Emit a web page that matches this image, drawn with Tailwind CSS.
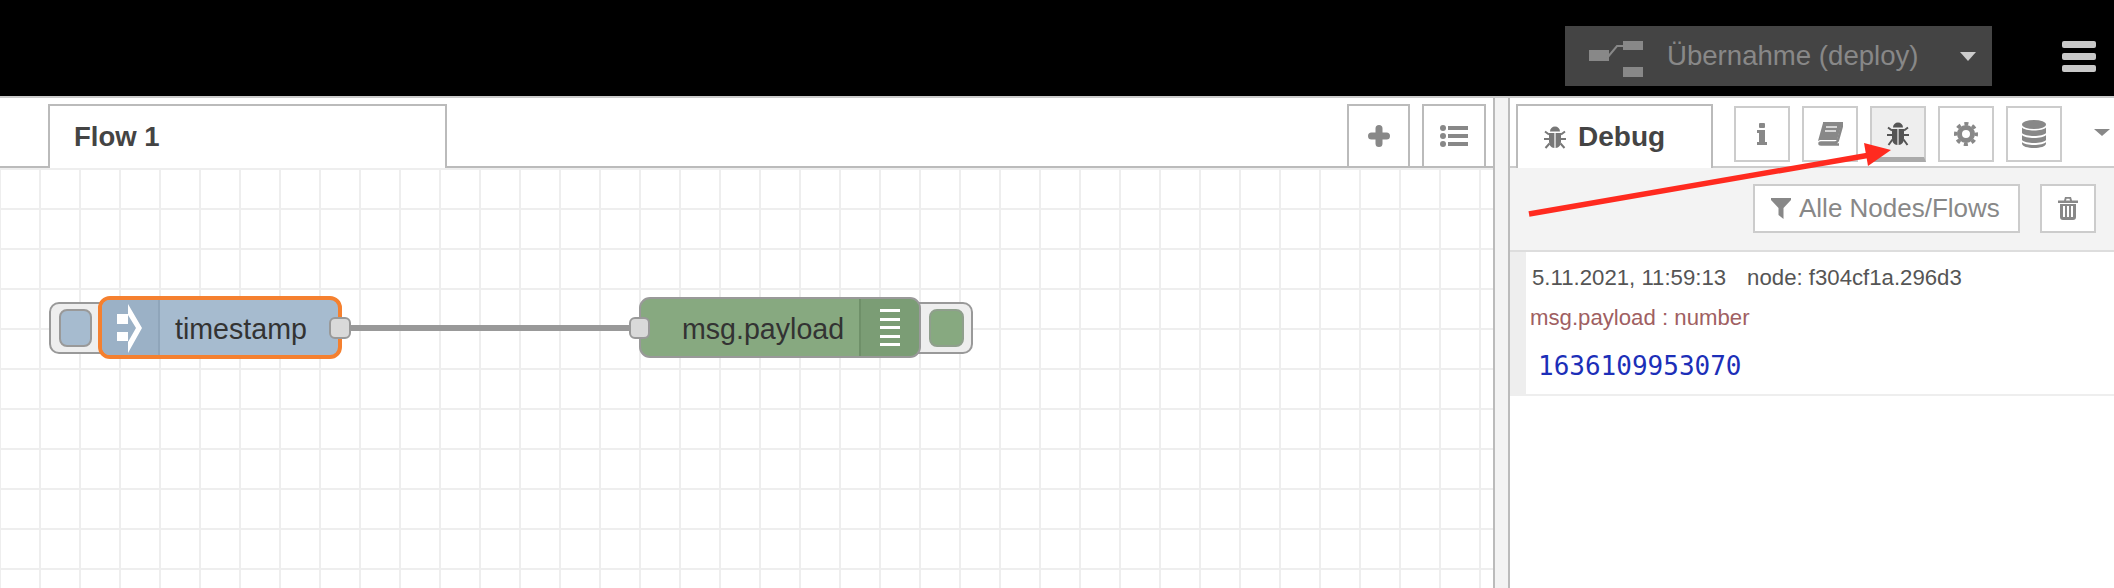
<!DOCTYPE html>
<html lang="de">
  <head>
    <meta charset="UTF-8" />
    <title>Node-RED</title>
    <script src="https://cdn.jsdelivr.net/npm/@tailwindcss/browser@4"></script>
  </head>
  <body class="bg-white overflow-hidden font-['Liberation_Sans',sans-serif]">
    <div class="relative w-[2114px] h-[588px] flex flex-col overflow-hidden">
      <!-- Header -->
      <header class="h-[98px] shrink-0 bg-black border-b-2 border-[#ccc] flex items-start justify-end">
        <div class="mt-[26px] w-[427px] h-[60px] bg-[#444] flex items-center text-[#888]">
          <svg class="ml-[24px] mt-[6px] w-[54px] h-[36px] shrink-0" viewBox="0 0 54 36" fill="#888">
            <rect x="0" y="9" width="20" height="11" />
            <rect x="34" y="0" width="20" height="9" />
            <rect x="34" y="26" width="20" height="10" />
            <path d="M18 17 L28 5 H35" fill="none" stroke="#888" stroke-width="2" />
          </svg>
          <span class="ml-[24px] text-[27.6px] leading-none whitespace-nowrap">Übernahme (deploy)</span>
          <svg class="ml-[41px] w-[16px] h-[9px] shrink-0" viewBox="0 0 16 9" fill="#ccc"><path d="M0 0H16L8 9Z" /></svg>
        </div>
        <div class="ml-[70px] mr-[18px] mt-[41px] w-[34px] flex flex-col gap-[5px]">
          <div class="h-[7px] rounded-[2px] bg-[#c8c8c8]"></div>
          <div class="h-[7px] rounded-[2px] bg-[#c8c8c8]"></div>
          <div class="h-[7px] rounded-[2px] bg-[#c8c8c8]"></div>
        </div>
      </header>

      <main class="flex flex-1 min-h-0">
        <!-- Workspace -->
        <section class="w-[1495px] shrink-0 flex flex-col border-r-2 border-[#bbb]">
          <div class="h-[70px] shrink-0 flex items-end border-b-2 border-[#bbb]">
            <div class="ml-[48px] -mb-[2px] w-[399px] h-[64px] bg-white border-2 border-b-0 border-[#bbb] pl-[24px] flex items-center text-[27.5px] font-bold text-[#444]">Flow 1</div>
            <div class="ml-[900px] -mb-[2px] w-[63px] h-[64px] border-2 border-[#bbb] flex items-center justify-center">
              <svg class="w-[22px] h-[22px]" viewBox="0 0 22 22"><path d="M3.5 11H18.5M11 3.5V18.5" stroke="#888" stroke-width="7" stroke-linecap="round" /></svg>
            </div>
            <div class="ml-[12px] -mb-[2px] w-[64px] h-[64px] border-2 border-[#bbb] flex items-center justify-center">
              <svg class="w-[28px] h-[22px]" viewBox="0 0 28 22" fill="#888">
                <circle cx="3" cy="3" r="3" /><circle cx="3" cy="11" r="3" /><circle cx="3" cy="19" r="3" />
                <rect x="8" y="1" width="20" height="4" /><rect x="8" y="9" width="20" height="4" /><rect x="8" y="17" width="20" height="4" />
              </svg>
            </div>
          </div>

          <!-- Canvas -->
          <div class="relative flex-1 overflow-hidden bg-white bg-[linear-gradient(to_right,#eee_2px,transparent_2px),linear-gradient(to_bottom,#eee_2px,transparent_2px)] bg-[size:40px_40px] bg-[position:-1px_0]">
            <!-- wire -->
            <div class="absolute left-[351px] top-[157px] w-[280px] h-[6px] bg-[#999]"></div>

            <!-- timestamp node -->
            <div class="absolute left-[49px] top-[134px] w-[60px] h-[52px] rounded-l-[10px] bg-[#eee] border-2 border-[#999] flex items-center pl-[8px]">
              <div class="w-[33px] h-[38px] rounded-[8px] bg-[#a6bbcf] border-2 border-[#999]"></div>
            </div>
            <div class="absolute left-[98px] top-[128px] w-[244px] h-[63px] rounded-[12px] border-4 border-[#f5802f] bg-[#a6bbcf] flex overflow-hidden">
              <div class="w-[58px] shrink-0 bg-[#9bb1c6] border-r-2 border-[#8fa5ba] relative">
                <svg class="absolute left-[15px] top-[4px] w-[26px] h-[50px]" viewBox="0 0 26 50" fill="#fff">
                  <rect x="0" y="10" width="11" height="10" />
                  <rect x="0" y="28" width="11" height="9" />
                  <path d="M11 0 L25 24 L11 49 V38 L19 24 L11 11 Z" />
                </svg>
              </div>
              <div class="flex-1 text-[28.6px] text-[#333] leading-none flex items-center pl-[15px] pt-[3px]">timestamp</div>
            </div>
            <div class="absolute left-[329px] top-[149px] w-[22px] h-[22px] rounded-[6px] bg-[#d9d9d9] border-2 border-[#999]"></div>

            <!-- msg.payload node -->
            <div class="absolute left-[905px] top-[134px] w-[68px] h-[52px] rounded-r-[10px] bg-[#eee] border-2 border-[#999] flex items-center justify-end pr-[7px]">
              <div class="w-[35px] h-[38px] rounded-[8px] bg-[#87a980] border-2 border-[#8f9f8c]"></div>
            </div>
            <div class="absolute left-[639px] top-[129px] w-[282px] h-[61px] rounded-[11px] border-2 border-[#999] bg-[#87a980] flex overflow-hidden">
              <div class="flex-1 text-[28.6px] text-[#333] leading-none flex items-center pl-[41px] pt-[3px]">msg.payload</div>
              <div class="w-[60px] shrink-0 bg-[#7b9d75] border-l-2 border-[#6f9069] flex flex-col items-center justify-center gap-[5.5px]">
                <div class="w-[20px] h-[3px] bg-white"></div>
                <div class="w-[20px] h-[3px] bg-white"></div>
                <div class="w-[20px] h-[3px] bg-white"></div>
                <div class="w-[20px] h-[3px] bg-white"></div>
                <div class="w-[20px] h-[3px] bg-white"></div>
              </div>
            </div>
            <div class="absolute left-[629px] top-[149px] w-[21px] h-[22px] rounded-[6px] bg-[#d9d9d9] border-2 border-[#999]"></div>
          </div>
        </section>

        <div class="w-[13px] shrink-0 bg-[#f3f3f3]"></div>

        <!-- Sidebar -->
        <aside class="flex-1 border-l-2 border-[#bbb] flex flex-col min-w-0">
          <div class="h-[70px] shrink-0 flex items-end border-b-2 border-[#ccc] relative">
            <div class="ml-[6px] -mb-[2px] w-[197px] h-[64px] bg-white border-2 border-b-0 border-[#bbb] flex items-center pl-[25px] text-[28px] font-bold text-[#444]">
              <svg class="w-[24px] h-[24px] mr-[11px]" viewBox="0 0 24 24" fill="#777">
                <path d="M7 6.5a5 5 0 0 1 10 0ZM6 8h5.4v15C8 23 6 20 6 16ZM12.6 8H18v8c0 4-2 7-5.4 7Z" />
                <path d="M6 9.5 2 6.5M18 9.5l4-3M1 14h5M18 14h5M6.5 18.5 2.5 23M17.5 18.5l4 4.5" fill="none" stroke="#777" stroke-width="2" />
              </svg>
              Debug
            </div>
            <!-- mb kept on buttons so they sit 4px above the bar line -->
            <div class="ml-[21px] mb-[4px] w-[56px] h-[56px] border-2 border-[#ccc] flex items-center justify-center">
              <svg class="w-[10px] h-[22px]" viewBox="0 0 10 22" fill="#888"><rect x="2" y="0" width="6" height="5" rx="1" /><path d="M0 7H8V19H10V22H0V19H2V10H0Z" /></svg>
            </div>
            <div class="ml-[12px] mb-[4px] w-[56px] h-[56px] border-2 border-[#ccc] flex items-center justify-center">
              <svg class="w-[26px] h-[24px]" viewBox="0 0 26 24">
                <path d="M6 0H26L21 18C20.5 20 19 20.5 17.5 20.5H4C2 20.5 2 22.5 4 22.5H22" fill="none" stroke="#888" stroke-width="2.5" />
                <path d="M6 1H25L20 18H3L1 19Z" fill="#888" />
                <path d="M9 5H20M8 9H19" stroke="#eee" stroke-width="1.5" />
              </svg>
            </div>
            <div class="ml-[12px] mb-[4px] w-[56px] h-[56px] border-2 border-b-[5px] border-[#ccc] border-b-[#aaa] bg-[#eee] flex items-start justify-center pt-[13px]">
              <svg class="w-[24px] h-[25px]" viewBox="0 0 24 25" fill="#555">
                <path d="M7 6.5a5 5 0 0 1 10 0ZM6 8h5.4v16C8 24 6 21 6 17ZM12.6 8H18v9c0 4-2 7-5.4 7Z" />
                <path d="M6 9.5 2 6.5M18 9.5l4-3M1 14h5M18 14h5M6.5 18.5 2.5 24M17.5 18.5l4 5.5" fill="none" stroke="#555" stroke-width="2" />
              </svg>
            </div>
            <div class="ml-[12px] mb-[4px] w-[56px] h-[56px] border-2 border-[#ccc] flex items-center justify-center">
              <svg class="w-[24px] h-[24px]" viewBox="0 0 24 24" fill="none" stroke="#888">
                <circle cx="12" cy="12" r="6.5" stroke-width="5" />
                <circle cx="12" cy="12" r="10.3" stroke-width="3.4" stroke-dasharray="4.1 3.99" stroke-dashoffset="2" />
              </svg>
            </div>
            <div class="ml-[12px] mb-[4px] w-[56px] h-[56px] border-2 border-[#ccc] flex items-center justify-center">
              <svg class="w-[24px] h-[28px]" viewBox="0 0 24 28" fill="#888">
                <ellipse cx="12" cy="4.5" rx="12" ry="4.5" />
                <path d="M0 7.5C3 11.5 21 11.5 24 7.5V13C21 17 3 17 0 13Z" />
                <path d="M0 15C3 19 21 19 24 15V20C21 24 3 24 0 20Z" />
                <path d="M0 22C3 26 21 26 24 22V23.5C24 29.5 0 29.5 0 23.5Z" />
              </svg>
            </div>
            <svg class="ml-[32px] mb-[30px] w-[16px] h-[7px] shrink-0" viewBox="0 0 16 7" fill="#888"><path d="M0 0H16L8 7Z" /></svg>
          </div>

          <div class="h-[84px] shrink-0 bg-[#f3f3f3] border-b-2 border-[#ddd] flex items-start justify-end pt-[16px] pr-[18px] gap-[20px]">
            <div class="w-[267px] h-[49px] bg-white border-2 border-[#ccc] flex items-center pl-[16px] text-[26px] text-[#888]">
              <svg class="w-[20px] h-[21px] mr-[8px]" viewBox="0 0 20 21" fill="#888"><path d="M0 0H20V2L12.5 10V21L7.5 17V10L0 2Z" /></svg>
              Alle Nodes/Flows
            </div>
            <div class="w-[56px] h-[49px] bg-white border-2 border-[#ccc] flex items-center justify-center">
              <svg class="w-[20px] h-[23px]" viewBox="0 0 20 23" fill="#888">
                <path d="M0 3.5H6L7 0H13L14 3.5H20V6H0ZM8.5 1.7 8 3.5H12L11.5 1.7Z" fill-rule="evenodd" />
                <path d="M2 7H18V20C18 22 17 23 15 23H5C3 23 2 22 2 20ZM5 9V20H7V9ZM9 9V20H11V9ZM13 9V20H15V9Z" fill-rule="evenodd" />
              </svg>
            </div>
          </div>

          <!-- Debug message -->
          <div class="h-[144px] shrink-0 border-b-2 border-[#eee] flex">
            <div class="w-[16px] shrink-0 bg-[#eee]"></div>
            <div class="flex-1 flex flex-col">
              <div class="mt-[14px] ml-[6px] h-[24px] flex items-center text-[22.2px] leading-none text-[#555] whitespace-pre">5.11.2021, 11:59:13<span class="ml-[21px]">node: f304cf1a.296d3</span></div>
              <div class="mt-[16px] ml-[4px] h-[24px] flex items-center text-[22.2px] leading-none text-[#a05f62]">msg.payload : number</div>
              <div class="mt-[21px] ml-[12px] h-[30px] flex items-center font-['DejaVu_Sans_Mono',monospace] text-[26px] leading-none text-[#1c2fb8]">1636109953070</div>
            </div>
          </div>
        </aside>
      </main>

      <!-- Red annotation arrow -->
      <svg class="absolute left-0 top-0 w-[2114px] h-[588px] pointer-events-none" viewBox="0 0 2114 588">
        <path d="M1529 214 L1870 155" stroke="#ff2a1f" stroke-width="5.5" fill="none" />
        <path d="M1891 150 L1864 143 L1868 166 Z" fill="#ff2a1f" />
      </svg>
    </div>
  </body>
</html>
